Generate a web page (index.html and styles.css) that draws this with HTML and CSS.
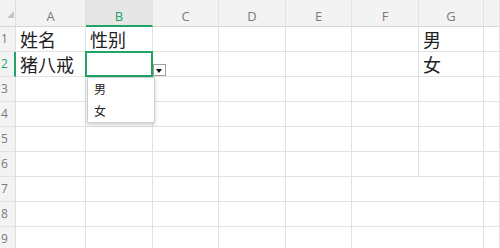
FILE: index.html
```html
<!DOCTYPE html>
<html lang="zh">
<head>
<meta charset="utf-8">
<link rel="stylesheet" href="styles.css">
</head>
<body>
<div class="sheet">
  <div class="corner"><span class="tri"></span></div>
  <div class="ch">A</div>
  <div class="ch active">B</div>
  <div class="ch">C</div>
  <div class="ch">D</div>
  <div class="ch">E</div>
  <div class="ch">F</div>
  <div class="ch">G</div>
  <div class="ch"></div>

  <div class="rh">1</div>
  <div class="c">姓名</div><div class="c">性别</div><div class="c"></div><div class="c"></div><div class="c"></div><div class="c"></div><div class="c">男</div><div class="c"></div>

  <div class="rh active">2</div>
  <div class="c">猪八戒</div>
  <div class="c sel">
    <span class="dd-btn"><span class="dd-tri"></span></span>
    <ul class="dd-list"><li>男</li><li>女</li></ul>
  </div>
  <div class="c"></div><div class="c"></div><div class="c"></div><div class="c"></div><div class="c">女</div><div class="c"></div>

  <div class="rh">3</div>
  <div class="c"></div><div class="c"></div><div class="c"></div><div class="c"></div><div class="c"></div><div class="c"></div><div class="c"></div><div class="c"></div>
  <div class="rh">4</div>
  <div class="c"></div><div class="c"></div><div class="c"></div><div class="c"></div><div class="c"></div><div class="c"></div><div class="c"></div><div class="c"></div>
  <div class="rh">5</div>
  <div class="c"></div><div class="c"></div><div class="c"></div><div class="c"></div><div class="c"></div><div class="c"></div><div class="c"></div><div class="c"></div>
  <div class="rh">6</div>
  <div class="c"></div><div class="c"></div><div class="c"></div><div class="c"></div><div class="c"></div><div class="c"></div><div class="c"></div><div class="c"></div>
  <div class="rh">7</div>
  <div class="c"></div><div class="c"></div><div class="c"></div><div class="c"></div><div class="c"></div><div class="c nor"></div><div class="c"></div><div class="c"></div>
  <div class="rh">8</div>
  <div class="c"></div><div class="c"></div><div class="c"></div><div class="c"></div><div class="c"></div><div class="c nor"></div><div class="c"></div><div class="c"></div>
  <div class="rh">9</div>
  <div class="c"></div><div class="c"></div><div class="c"></div><div class="c"></div><div class="c"></div><div class="c nor"></div><div class="c"></div><div class="c"></div>
</div>
</body>
</html>
```
FILE: styles.css
```css
html, body {
  margin: 0;
  padding: 0;
  background: #ffffff;
  overflow: hidden;
}
.sheet {
  display: grid;
  grid-template-columns: 16px 70px 67px 66px 67px 66px 67px 65px 16px;
  grid-template-rows: 27px repeat(9, 25px);
  width: 500px;
  height: 248px;
  overflow: hidden;
  font-family: "Noto Sans CJK SC", "Noto Sans", sans-serif;
}
.corner {
  position: relative;
  background: #f3f3f3;
  border-bottom: 1px solid #d6d6d6;
  border-right: 1px solid #dedede;
  box-sizing: border-box;
}
.tri {
  position: absolute;
  right: 1px;
  bottom: 8px;
  width: 0;
  height: 0;
  border-left: 7px solid transparent;
  border-bottom: 7px solid #c6c6c6;
}
.ch {
  box-sizing: border-box;
  background: #f3f3f3;
  border-right: 1px solid #e2e2e2;
  border-bottom: 1px solid #d6d6d6;
  color: #7a7a7a;
  font-family: "Open Sans", "Noto Sans", sans-serif;
  font-size: 13px;
  text-align: center;
  line-height: 26px;
  padding-top: 3px;
}
.ch.active {
  background: #e6e6e6;
  color: #21a366;
  border-bottom: 2px solid #21a366;
}
.rh {
  box-sizing: border-box;
  background: #f3f3f3;
  border-right: 1px solid #dedede;
  border-bottom: 1px solid #e2e2e2;
  color: #7a7a7a;
  font-family: "Open Sans", "Noto Sans", sans-serif;
  font-size: 12px;
  line-height: 24px;
  padding-left: 1px;
}
.rh.active {
  color: #21a366;
  border-right: 2px solid #21a366;
}
.c {
  box-sizing: border-box;
  border-right: 1px solid #e2e2e2;
  border-bottom: 1px solid #e2e2e2;
  font-size: 18px;
  line-height: 24px;
  padding-left: 4px;
  color: #222;
  white-space: nowrap;
}
.c.nor {
  border-right-color: transparent;
}
.sel {
  position: relative;
}
.sel::after {
  content: "";
  position: absolute;
  left: -1px;
  top: -1px;
  right: -1px;
  bottom: -1px;
  border: 2px solid #21a366;
}
.dd-btn {
  position: absolute;
  left: 67px;
  top: 12px;
  width: 13px;
  height: 12px;
  box-sizing: border-box;
  border: 1px solid #a0a0a0;
  background: #fff;
  z-index: 2;
}
.dd-tri {
  position: absolute;
  left: 2px;
  top: 4px;
  width: 0;
  height: 0;
  border-left: 3.5px solid transparent;
  border-right: 3.5px solid transparent;
  border-top: 4px solid #111;
}
.dd-list {
  position: absolute;
  left: 1px;
  top: 25px;
  width: 68px;
  height: 46px;
  margin: 0;
  padding: 0;
  list-style: none;
  box-sizing: border-box;
  background: #fff;
  border: 1px solid #cfcfcf;
  box-shadow: 0 2px 4px rgba(0, 0, 0, 0.18);
  z-index: 3;
}
.dd-list li {
  font-size: 12px;
  line-height: 22px;
  height: 22px;
  padding-left: 6px;
  color: #222;
}
```
